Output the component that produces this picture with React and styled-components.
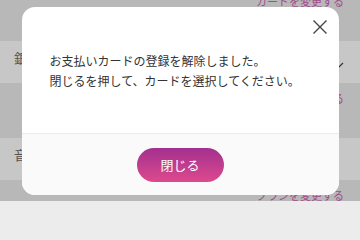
import React from 'react';
import styled, { createGlobalStyle } from 'styled-components';

const GlobalStyle = createGlobalStyle`
  html, body {
    margin: 0;
    padding: 0;
    background: #ececec;
    font-family: "Noto Sans CJK JP", "Noto Sans", sans-serif;
    overflow: hidden;
  }
`;

const Screen = styled.div`
  position: relative;
  width: 360px;
  height: 201px;
  overflow: hidden;
  background: #ececec;
`;

const Page = styled.div`
  margin-top: -14px;
  display: flex;
  flex-direction: column;
`;

const LinkArea = styled.div`
  height: 55px;
  box-sizing: border-box;
  padding: 7px 16px 0;
  background: #ececec;
  display: flex;
  justify-content: flex-end;
`;

const EditLink = styled.span`
  font-size: 11px;
  line-height: 16px;
  color: #cf62b4;
`;

const Row = styled.div`
  height: 42px;
  box-sizing: border-box;
  padding: 7px 16px 0 14px;
  background: #fff;
  display: flex;
  justify-content: space-between;
  align-items: flex-start;
`;

const Label = styled.span`
  font-size: 13px;
  line-height: 20px;
  color: #6a6a6a;
`;

const Chevron = styled.svg`
  width: 10px;
  height: 6px;
  margin-top: 14px;
`;

const Overlay = styled.div`
  position: absolute;
  inset: 0;
  background: rgba(0, 0, 0, 0.22);
  display: flex;
  align-items: center;
  justify-content: center;
`;

const Modal = styled.div`
  position: relative;
  width: 317px;
  background: #fff;
  border-radius: 13px;
  overflow: hidden;
`;

const Body = styled.div`
  padding: 44px 20px 42px 28px;
`;

const Message = styled.p`
  margin: 0;
  font-size: 12px;
  line-height: 20px;
  color: #333;
  white-space: nowrap;
`;

const CloseButton = styled.button`
  position: absolute;
  top: 13px;
  right: 12px;
  width: 14px;
  height: 14px;
  padding: 0;
  border: 0;
  background: none;
  display: flex;
`;

const Footer = styled.div`
  border-top: 1px solid #ebebeb;
  background: #fafafa;
  padding: 14px 0 13px;
  display: flex;
  justify-content: center;
`;

const PrimaryButton = styled.button`
  width: 87px;
  height: 34px;
  border: 0;
  border-radius: 17px;
  background: linear-gradient(180deg, #a3308f 0%, #dc4a8d 100%);
  color: #fff;
  font-family: "Noto Sans CJK JP", sans-serif;
  font-size: 13px;
  line-height: 34px;
  padding: 0;
`;

function Settings() {
  return (
    <Page>
      <LinkArea><EditLink>カードを変更する</EditLink></LinkArea>
      <Row>
        <Label>銀行口座</Label>
        <Chevron viewBox="0 0 10 6">
          <path d="M1 1 L5 5 L9 1" fill="none" stroke="#444" strokeWidth="1.2" />
        </Chevron>
      </Row>
      <LinkArea><EditLink>口座を変更する</EditLink></LinkArea>
      <Row>
        <Label>音声通話</Label>
      </Row>
      <LinkArea><EditLink>プランを変更する</EditLink></LinkArea>
    </Page>
  );
}

export default function App() {
  return (
    <Screen>
      <GlobalStyle />
      <Settings />
      <Overlay>
        <Modal>
          <CloseButton aria-label="閉じる">
            <svg width="14" height="14" viewBox="0 0 14 14">
              <path d="M0.5 0.5 L13.5 13.5 M13.5 0.5 L0.5 13.5" stroke="#444" strokeWidth="1.4" />
            </svg>
          </CloseButton>
          <Body>
            <Message>お支払いカードの登録を解除しました。</Message>
            <Message>閉じるを押して、カードを選択してください。</Message>
          </Body>
          <Footer>
            <PrimaryButton>閉じる</PrimaryButton>
          </Footer>
        </Modal>
      </Overlay>
    </Screen>
  );
}
